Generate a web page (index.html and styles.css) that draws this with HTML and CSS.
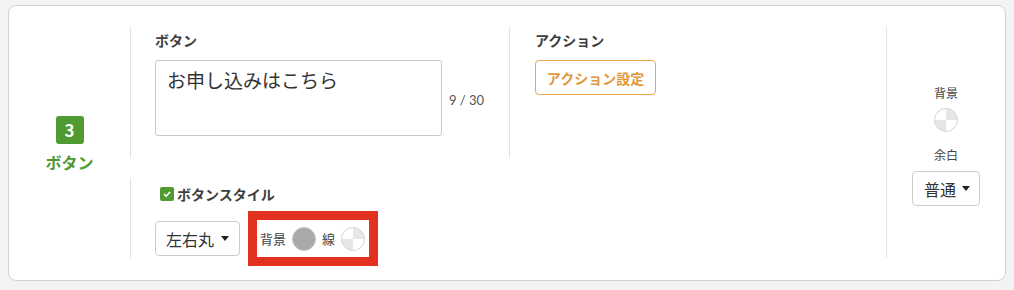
FILE: index.html
```html
<!DOCTYPE html>
<html lang="ja">
<head>
<meta charset="utf-8">
<link rel="stylesheet" href="styles.css">
</head>
<body>
<div class="card">
  <div class="side-left">
    <div class="badge">3</div>
    <div class="badge-label">ボタン</div>
  </div>
  <div class="middle">
    <div class="top-row">
      <div class="sect">
        <div class="label">ボタン</div>
        <div class="text-row">
          <textarea class="textarea">お申し込みはこちら</textarea>
          <span class="counter">9 / 30</span>
        </div>
      </div>
      <div class="sect">
        <div class="label">アクション</div>
        <button class="action-btn">アクション設定</button>
      </div>
    </div>
    <div class="bottom-row">
      <div class="check-row">
        <span class="checkbox"><svg width="10" height="10" viewBox="0 0 10 10"><path d="M2 5.2 L4.2 7.2 L8 3" fill="none" stroke="#fff" stroke-width="1.6"/></svg></span>
        <span class="label">ボタンスタイル</span>
      </div>
      <div class="style-row">
        <div class="select select-wide"><span>左右丸</span><span class="caret"></span></div>
        <div class="colors highlight">
          <span class="small">背景</span>
          <span class="swatch gray"></span>
          <span class="small">線</span>
          <span class="swatch checker"></span>
        </div>
      </div>
    </div>
  </div>
  <div class="side-right">
    <span class="small side-text">背景</span>
    <span class="swatch checker sw-bg"></span>
    <span class="small side-text margin-label">余白</span>
    <div class="select select-narrow"><span>普通</span><span class="caret"></span></div>
  </div>
</div>
</body>
</html>
```
FILE: styles.css
```css
html, body {
  margin: 0;
  padding: 0;
  background: #f3f3f3;
}
body {
  padding: 5px 8px 0 8px;
  font-family: "Noto Sans CJK JP", "Noto Sans", sans-serif;
  color: #333;
}
.card {
  box-sizing: border-box;
  width: 998px;
  height: 276px;
  background: #fff;
  border: 1px solid #d2d2d2;
  border-radius: 8px;
  display: grid;
  grid-template-columns: 121px 1fr 119px;
  padding: 21px 0 22px 0;
}
.side-left {
  display: flex;
  flex-direction: column;
  align-items: center;
  justify-content: center;
  padding-top: 4px;
}
.badge {
  width: 28px;
  height: 28px;
  border-radius: 3px;
  background: #4f9a31;
  color: #fff;
  font-weight: 700;
  font-size: 17px;
  line-height: 28px;
  text-align: center;
}
.badge-label {
  margin-top: 7px;
  font-size: 16px;
  line-height: 22px;
  font-weight: 700;
  color: #4f9a31;
}
.middle {
  display: grid;
  grid-template-rows: 131px 80px;
  row-gap: 20px;
}
.top-row {
  display: grid;
  grid-template-columns: 379px 1fr;
}
.sect {
  border-left: 1px solid #e3e3e3;
  padding: 4px 0 0 24px;
}
.sect + .sect {
  padding-left: 25px;
}
.label {
  font-size: 14px;
  line-height: 18px;
  font-weight: 700;
  color: #3d3d3d;
}
.sect .label {
  margin-bottom: 11px;
}
.text-row {
  display: flex;
  align-items: center;
  gap: 7px;
}
.textarea {
  box-sizing: border-box;
  width: 287px;
  height: 76px;
  border: 1px solid #c9c9c9;
  border-radius: 3px;
  padding: 6px 11px;
  margin: 0;
  font-family: "Noto Sans CJK JP", sans-serif;
  font-size: 19px;
  line-height: 26px;
  color: #333;
  resize: none;
  overflow: hidden;
  outline: none;
}
.counter {
  font-family: "Lato", "Noto Sans", sans-serif;
  font-size: 13px;
  color: #555;
  padding-top: 3px;
}
.action-btn {
  box-sizing: border-box;
  width: 121px;
  height: 35px;
  padding: 0;
  background: #fff;
  border: 1px solid #e9a64f;
  border-radius: 4px;
  color: #e2973a;
  font-family: "Noto Sans CJK JP", sans-serif;
  font-size: 14px;
  font-weight: 700;
}
.bottom-row {
  border-left: 1px solid #e3e3e3;
  padding: 7px 0 0 24px;
}
.check-row {
  display: flex;
  align-items: center;
  gap: 3px;
  padding-left: 5px;
}
.checkbox {
  width: 14px;
  height: 14px;
  border-radius: 2px;
  background: #4f9a31;
  display: flex;
  align-items: center;
  justify-content: center;
}
.style-row {
  margin-top: 17px;
  display: flex;
  align-items: center;
  gap: 17px;
}
.select {
  box-sizing: border-box;
  height: 35px;
  border: 1px solid #cdcdcd;
  border-radius: 4px;
  display: flex;
  align-items: center;
  gap: 7px;
  font-size: 16px;
  color: #333;
  background: #fff;
}
.select-wide {
  width: 85px;
  padding-left: 10px;
}
.select-narrow {
  width: 68px;
  padding-left: 11px;
  gap: 6px;
}
.caret {
  width: 0;
  height: 0;
  border-left: 4px solid transparent;
  border-right: 4px solid transparent;
  border-top: 5px solid #222;
}
.colors {
  box-sizing: border-box;
  width: 112px;
  height: 37px;
  padding: 0 3px;
  display: flex;
  align-items: center;
  gap: 6px;
}
.highlight {
  outline: 9px solid #e2321f;
}
.small {
  font-size: 13px;
  line-height: 18px;
  color: #444;
}
.side-text {
  font-size: 12px;
}
.swatch {
  box-sizing: border-box;
  width: 24px;
  height: 24px;
  border-radius: 50%;
  flex: none;
}
.gray {
  background: #a9a9a9;
  border: 1px solid #c8c8c8;
}
.checker {
  border: 1px solid #d4d4d4;
  background: conic-gradient(#e6e6e6 0 25%, #fff 25% 50%, #e6e6e6 50% 75%, #fff 75% 100%);
}
.side-right {
  border-left: 1px solid #e3e3e3;
  display: flex;
  flex-direction: column;
  align-items: center;
  justify-content: center;
  padding-top: 5px;
}
.sw-bg {
  margin-top: 6px;
}
.margin-label {
  margin-top: 14px;
  margin-bottom: 7px;
}
```
